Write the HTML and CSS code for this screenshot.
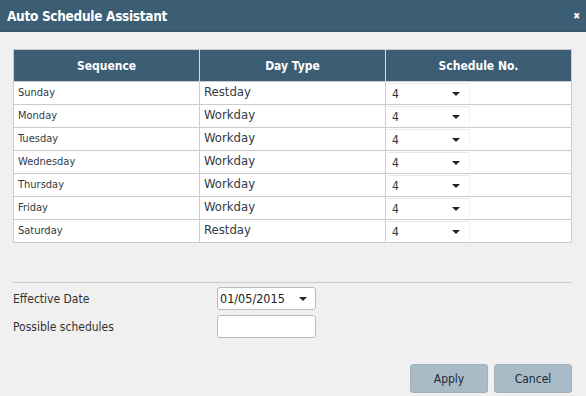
FILE: index.html
```html
<!DOCTYPE html>
<html lang="en">
<head>
    <meta charset="UTF-8">
    <title>Auto Schedule Assistant</title>
    <link rel="stylesheet" href="styles.css">
</head>
<body>
    <div class="dialog">
        <div class="dialog-header">
            <span class="dialog-title">Auto Schedule Assistant</span>
            <span class="dialog-close">&#x2716;</span>
        </div>
        <div class="dialog-body">
            <table class="schedule-table">
                <thead>
                    <tr>
                        <th>Sequence</th>
                        <th>Day Type</th>
                        <th>Schedule No.</th>
                    </tr>
                </thead>
                <tbody>
                    <tr><td class="day">Sunday</td><td class="type">Restday</td><td><div class="select-box">4<span class="caret"></span></div></td></tr>
                    <tr><td class="day">Monday</td><td class="type">Workday</td><td><div class="select-box">4<span class="caret"></span></div></td></tr>
                    <tr><td class="day">Tuesday</td><td class="type">Workday</td><td><div class="select-box">4<span class="caret"></span></div></td></tr>
                    <tr><td class="day">Wednesday</td><td class="type">Workday</td><td><div class="select-box">4<span class="caret"></span></div></td></tr>
                    <tr><td class="day">Thursday</td><td class="type">Workday</td><td><div class="select-box">4<span class="caret"></span></div></td></tr>
                    <tr><td class="day">Friday</td><td class="type">Workday</td><td><div class="select-box">4<span class="caret"></span></div></td></tr>
                    <tr><td class="day">Saturday</td><td class="type">Restday</td><td><div class="select-box">4<span class="caret"></span></div></td></tr>
                </tbody>
            </table>

            <div class="form-area">
                <div class="form-row">
                    <label>Effective Date</label>
                    <div class="field date-field">01/05/2015<span class="caret"></span></div>
                </div>
                <div class="form-row">
                    <label>Possible schedules</label>
                    <div class="field"></div>
                </div>
            </div>

            <div class="actions">
                <button class="btn">Apply</button>
                <button class="btn">Cancel</button>
            </div>
        </div>
    </div>
</body>
</html>
```

FILE: styles.css
```css
/* General */
body {
    margin: 0;
    font-family: 'DejaVu Sans Condensed', 'DejaVu Sans', sans-serif;
    background-color: #f0f0f0;
    color: #333333;
}

.dialog {
    width: 586px;
    height: 396px;
    background-color: #f0f0f0;
    overflow: hidden;
}

/* Header */
.dialog-header {
    height: 31px;
    background-color: #3b5e75;
    border-bottom: 1px solid #35566b;
    display: flex;
    align-items: center;
    justify-content: space-between;
    padding: 0 6px 0 7px;
}

.dialog-title {
    color: #ffffff;
    font-size: 13.5px;
    font-weight: bold;
    letter-spacing: -0.3px;
}

.dialog-close {
    color: #ffffff;
    font-size: 9px;
    font-weight: bold;
}

.dialog-body {
    padding: 17px 14px 0 13px;
}

/* Table */
.schedule-table {
    width: 559px;
    border-collapse: collapse;
    table-layout: fixed;
    background-color: #ffffff;
    border: 1px solid #cccccc;
}

.schedule-table th {
    height: 31px;
    padding: 0;
    background-color: #3b5e75;
    color: #ffffff;
    font-size: 12px;
    font-weight: bold;
    border-left: 1px solid #d5dde2;
}

.schedule-table th:first-child {
    border-left: none;
}

.schedule-table tbody tr {
    height: 23px;
}

.schedule-table td {
    padding: 0 0 0 4px;
    border: 1px solid #cccccc;
    font-size: 11px;
    line-height: 14px;
    color: #333a44;
    vertical-align: middle;
}

.schedule-table td.type {
    font-size: 13px;
    line-height: 14px;
    padding-bottom: 2px;
}

.select-box {
    width: 82px;
    height: 20px;
    margin-left: -2px;
    padding-left: 4px;
    box-sizing: border-box;
    display: flex;
    align-items: center;
    font-size: 12px;
    color: #333333;
    border-top: 1px solid #e8e8e8;
    border-right: 1px solid #f4f4f4;
}

.caret {
    width: 0;
    height: 0;
    border-left: 4px solid transparent;
    border-right: 4px solid transparent;
    border-top: 4px solid #222222;
    margin-left: auto;
    margin-right: 9px;
}

/* Form */
.form-area {
    margin-top: 39px;
    border-top: 1px solid #cccccc;
    padding-top: 4px;
}

.form-row {
    display: flex;
    align-items: center;
    margin-bottom: 5px;
}

.form-row label {
    width: 204px;
    font-size: 12px;
    color: #333333;
}

.field {
    width: 99px;
    height: 23px;
    box-sizing: border-box;
    background-color: #ffffff;
    border: 1px solid #bbbbbb;
    border-radius: 3px;
    display: flex;
    align-items: center;
    padding-left: 2px;
    font-size: 12.5px;
    color: #222222;
}

.date-field .caret {
    margin-right: 8px;
}

/* Buttons */
.actions {
    display: flex;
    justify-content: flex-end;
    gap: 6px;
    margin-top: 26px;
}

.btn {
    width: 78px;
    height: 29px;
    background-color: #a9bbc6;
    border: 1px solid #9fb1bc;
    border-radius: 3px;
    font-family: 'DejaVu Sans Condensed', 'DejaVu Sans', sans-serif;
    font-size: 12px;
    color: #1e2a3a;
}
```
